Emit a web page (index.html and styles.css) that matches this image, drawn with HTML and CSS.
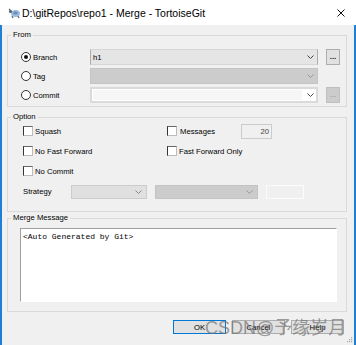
FILE: index.html
```html
<!DOCTYPE html>
<html lang="en">
<head>
    <meta charset="UTF-8">
    <meta name="viewport" content="width=device-width, initial-scale=1.0">
    <title>Merge - TortoiseGit</title>
    <link rel="stylesheet" href="styles.css">
</head>
<body>
    <div class="window">
        <div class="titlebar">
            <svg class="app-icon" width="13" height="12" viewBox="0 0 13 12">
                <ellipse cx="7.5" cy="6.5" rx="4.5" ry="3.5" fill="#9dbfe0"/>
                <ellipse cx="7.5" cy="6" rx="2.5" ry="1.8" fill="#6f93b8"/>
                <circle cx="2.5" cy="4.5" r="1.6" fill="#5a6470"/>
                <path d="M1 2 L3 4 M4 9 L5 11 M10 9 L11 11" stroke="#5a6470" stroke-width="1.2"/>
            </svg>
            <span class="title">D:\gitRepos\repo1 - Merge - TortoiseGit</span>
            <svg class="close" width="8" height="8" viewBox="0 0 8 8">
                <path d="M0.5 0.5 L7.5 7.5 M7.5 0.5 L0.5 7.5" stroke="#111" stroke-width="1"/>
            </svg>
        </div>

        <div class="client">
            <fieldset class="group">
                <legend>From</legend>
                <div class="from-grid">
                    <label class="radio"><span class="circle checked"></span>Branch</label>
                    <div class="combo">
                        <span class="value">h1</span>
                        <svg class="arrow" width="7" height="4" viewBox="0 0 7 4"><path d="M0.5 0.5 L3.5 3.5 L6.5 0.5" fill="none" stroke="#444"/></svg>
                    </div>
                    <span class="dots-btn">...</span>

                    <label class="radio"><span class="circle"></span>Tag</label>
                    <div class="combo disabled">
                        <span class="value"></span>
                        <svg class="arrow" width="7" height="4" viewBox="0 0 7 4"><path d="M0.5 0.5 L3.5 3.5 L6.5 0.5" fill="none" stroke="#999"/></svg>
                    </div>
                    <span></span>

                    <label class="radio"><span class="circle"></span>Commit</label>
                    <div class="combo editable">
                        <span class="field"></span>
                        <svg class="arrow" width="7" height="4" viewBox="0 0 7 4"><path d="M0.5 0.5 L3.5 3.5 L6.5 0.5" fill="none" stroke="#444"/></svg>
                    </div>
                    <span class="dots-btn disabled">...</span>
                </div>
            </fieldset>

            <fieldset class="group option">
                <legend>Option</legend>
                <div class="opt-grid">
                    <label class="check"><span class="box"></span>Squash</label>
                    <div class="check-row">
                        <label class="check messages"><span class="box"></span>Messages</label>
                        <span class="num">20</span>
                    </div>

                    <label class="check"><span class="box"></span>No Fast Forward</label>
                    <label class="check"><span class="box"></span>Fast Forward Only</label>

                    <label class="check"><span class="box"></span>No Commit</label>
                    <span></span>

                    <div class="strategy">
                        <span class="strategy-label">Strategy</span>
                        <div class="combo small light">
                            <span class="value"></span>
                            <svg class="arrow" width="7" height="4" viewBox="0 0 7 4"><path d="M0.5 0.5 L3.5 3.5 L6.5 0.5" fill="none" stroke="#888"/></svg>
                        </div>
                        <div class="combo small disabled wide">
                            <span class="value"></span>
                            <svg class="arrow" width="7" height="4" viewBox="0 0 7 4"><path d="M0.5 0.5 L3.5 3.5 L6.5 0.5" fill="none" stroke="#999"/></svg>
                        </div>
                        <span class="edit"></span>
                    </div>
                </div>
            </fieldset>

            <fieldset class="group merge">
                <legend>Merge Message</legend>
                <div class="merge-body">
                    <textarea class="message">&lt;Auto Generated by Git&gt;</textarea>
                </div>
            </fieldset>

            <div class="buttons">
                <button class="btn default">OK</button>
                <button class="btn">Cancel</button>
                <button class="btn">Help</button>
            </div>
        </div>

        <span class="watermark">CSDN@予缘岁月</span>
        <svg class="grip" width="6" height="6" viewBox="0 0 6 6">
            <rect x="4" y="0" width="1.2" height="1.2" fill="#aaa"/>
            <rect x="2" y="2" width="1.2" height="1.2" fill="#aaa"/>
            <rect x="4" y="2" width="1.2" height="1.2" fill="#aaa"/>
            <rect x="0" y="4" width="1.2" height="1.2" fill="#aaa"/>
            <rect x="2" y="4" width="1.2" height="1.2" fill="#aaa"/>
            <rect x="4" y="4" width="1.2" height="1.2" fill="#aaa"/>
        </svg>
    </div>
</body>
</html>
```

FILE: styles.css
```css
body {
    margin: 0;
    padding: 0;
    font-family: "Liberation Sans", Arial, sans-serif;
    font-size: 7.7px;
    color: #000;
    background: #f0f0f0;
}

.window {
    position: relative;
    width: 356px;
    height: 345px;
    overflow: hidden;
    background: #f0f0f0;
}

/* title bar */
.titlebar {
    height: 25px;
    background: #fff;
    display: flex;
    align-items: center;
    padding-left: 8px;
}

.app-icon {
    flex: none;
}

.title {
    margin-left: 1px;
    font-size: 10.5px;
    flex: 1;
    white-space: nowrap;
}

.close {
    margin-right: 11px;
}

/* dialog area */
.client {
    height: 320px;
    box-sizing: border-box;
    display: flex;
    flex-direction: column;
    padding: 5px 7px 0 5px;
    border-left: 2px solid #1e7fd6;
    border-right: 2px solid #1e7fd6;
}

.group {
    margin: 0;
    padding: 0;
    min-width: 0;
    border: 1px solid #d9d9d9;
}

.group legend {
    margin-left: 3px;
    padding: 0 2px;
    line-height: 10px;
    font-size: 7.7px;
}

.option {
    margin-top: 5px;
}

.merge {
    margin-top: 1px;
}

/* From */
.from-grid {
    display: grid;
    grid-template-columns: 69px 1fr 22px;
    grid-auto-rows: 16px;
    row-gap: 3px;
    padding: 9px 6px 3px 13px;
    align-items: center;
}

.radio {
    display: flex;
    align-items: center;
    gap: 2px;
}

.circle {
    width: 10px;
    height: 10px;
    box-sizing: border-box;
    border: 1px solid #333;
    border-radius: 50%;
    background: #fff;
    display: flex;
    align-items: center;
    justify-content: center;
}

.circle.checked::after {
    content: "";
    width: 4px;
    height: 4px;
    border-radius: 50%;
    background: #111;
}

.combo {
    height: 16px;
    box-sizing: border-box;
    display: flex;
    align-items: center;
    background: #e5e5e5;
    border: 1px solid #d6d6d6;
    border-left-color: #adadad;
    border-right-color: #adadad;
    padding: 0 3px 0 2px;
}

.combo .value {
    flex: 1;
}

.combo.disabled {
    background: #cccccc;
    border-color: #c4c4c4;
}

.combo.editable {
    background: #fff;
    border: 2px solid #dadada;
    padding: 1px 2px 1px 1px;
}

.combo.editable .field {
    flex: 1;
    align-self: stretch;
    background: #f6f6f6;
    margin-right: 5px;
}

.dots-btn {
    justify-self: end;
    width: 14px;
    height: 16px;
    box-sizing: border-box;
    background: #e1e1e1;
    border: 1px solid #adadad;
    text-align: center;
    line-height: 14px;
    font-size: 8px;
    font-weight: bold;
    color: #222;
}

.dots-btn.disabled {
    background: #cccccc;
    border-color: #bfbfbf;
    color: #8c8c8c;
    font-weight: normal;
}

/* Option */
.opt-grid {
    display: grid;
    grid-template-columns: 144px 1fr;
    grid-auto-rows: 14px;
    row-gap: 6px;
    padding: 2px 6px 13px 15px;
    align-items: center;
}

.check {
    display: flex;
    align-items: center;
    gap: 2px;
    white-space: nowrap;
}

.box {
    width: 10px;
    height: 10px;
    box-sizing: border-box;
    background: #fff;
    border: 1px solid;
    border-color: #666 #bbb #bbb #333;
}

.check-row {
    display: flex;
    align-items: center;
}

.messages {
    width: 74px;
    gap: 3px;
}

.num {
    width: 31px;
    height: 15px;
    box-sizing: border-box;
    border: 1px solid #cccccc;
    background: #f0f0f0;
    text-align: right;
    padding-right: 2px;
    line-height: 13px;
    color: #444;
}

.strategy {
    grid-column: 1 / 3;
    display: flex;
    align-items: center;
    margin-top: 1px;
}

.strategy-label {
    width: 48px;
}

.combo.small {
    height: 14px;
    width: 76px;
    padding-right: 4px;
}

.combo.light {
    background: #e0e0e0;
    border-color: #cccccc;
}

.combo.wide {
    width: 103px;
    margin-left: 8px;
}

.edit {
    width: 38px;
    height: 14px;
    box-sizing: border-box;
    margin-left: 8px;
    border: 1px solid #fbfbfb;
    background: #f0f0f0;
}

/* Merge message */
.merge-body {
    padding: 5px 9px 9px 12px;
}

.message {
    display: block;
    width: 100%;
    height: 74px;
    box-sizing: border-box;
    margin: 0;
    resize: none;
    border: 1px solid #fff;
    border-top-color: #a0a0a0;
    border-left-color: #a0a0a0;
    background: #fff;
    padding: 3px 2px;
    font-family: "Liberation Mono", "Courier New", monospace;
    font-size: 8px;
    line-height: 9px;
    color: #000;
    outline: none;
}

/* bottom buttons */
.buttons {
    display: flex;
    justify-content: flex-end;
    gap: 6px;
    margin-top: 8px;
    margin-right: 3px;
}

.btn {
    width: 53px;
    height: 14px;
    box-sizing: border-box;
    padding: 0;
    background: #e1e1e1;
    border: 1px solid #adadad;
    font-family: "Liberation Sans", Arial, sans-serif;
    font-size: 7.7px;
    color: #000;
}

.btn.default {
    border-color: #0078d7;
}

.watermark {
    position: absolute;
    left: 205px;
    top: 318px;
    font-family: "Liberation Sans", "Noto Sans CJK SC", sans-serif;
    font-size: 18px;
    line-height: 20px;
    color: rgba(115, 115, 115, 0.7);
    white-space: nowrap;
}

.grip {
    position: absolute;
    right: 3px;
    bottom: 2px;
}
```
